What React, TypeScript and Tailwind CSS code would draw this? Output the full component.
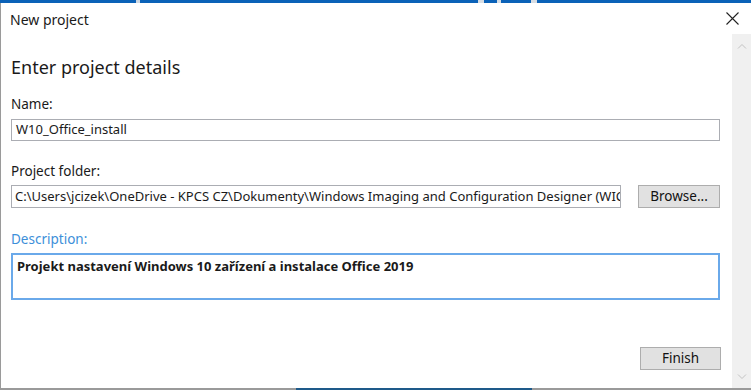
import React from 'react';

const FONT = { fontFamily: '"Segoe UI", "Noto Sans", "Open Sans", sans-serif' };

const TopStrip = () => (
  <div className="flex h-[3px] w-full">
    <div className="w-[136px] bg-[#0b62b8]" />
    <div className="w-[4px] bg-[#cfd8e2]" />
    <div className="w-[338px] bg-[#0b62b8]" />
    <div className="w-[6px] bg-[#d8dde3]" />
    <div className="w-[13px] bg-[#0b62b8]" />
    <div className="w-[4px] bg-[#d8dde3]" />
    <div className="w-[30px] bg-[#0b62b8]" />
    <div className="w-[6px] bg-[#d8dde3]" />
    <div className="flex-1 bg-[#0b62b8]" />
  </div>
);

const Chevron = ({ up }: { up?: boolean }) => (
  <svg width="10" height="6" viewBox="0 0 10 6" className="text-[#c2c2c2]">
    <path d={up ? 'M1 5.5 L5 1.5 L9 5.5' : 'M1 0.5 L5 4.5 L9 0.5'} fill="none" stroke="currentColor" strokeWidth="1" />
  </svg>
);

const Button = ({ label, w }: { label: string; w: string }) => (
  <button className={`${w} h-[23px] shrink-0 border border-[#adadad] bg-[#e1e1e1] text-[13.5px] text-[#111] leading-none`}>
    {label}
  </button>
);

export default function App() {
  return (
    <div className="w-[751px] h-[390px] bg-white overflow-hidden flex flex-col text-[#1a1a1a]" style={FONT}>
      <TopStrip />
      <div className="flex-1 flex flex-col border-l border-[#9a9a9a] min-h-0">
        <div className="h-[31px] shrink-0 flex items-center justify-between pl-[9px] pr-[12px]">
          <span className="text-[14px] pt-[1px]">New project</span>
          <svg width="13" height="13" viewBox="0 0 13 13">
            <path d="M0.5 0.5 L12.5 12.5 M12.5 0.5 L0.5 12.5" stroke="#222" strokeWidth="1.1" />
          </svg>
        </div>
        <div className="flex-1 flex min-h-0">
          <div className="flex-1 min-w-0 flex flex-col pl-[10px] pr-[12px]">
            <div className="text-[18px] leading-[24px] mt-[21px]">Enter project details</div>
            <div className="text-[13.5px] mt-[16px] leading-[18px]">Name:</div>
            <div className="mt-[6px] h-[22px] border border-[#abadb3] flex items-center px-[4px] text-[13px]">
              W10_Office_install
            </div>
            <div className="text-[13.5px] mt-[21px] leading-[18px]">Project folder:</div>
            <div className="mt-[5px] flex items-center gap-[17px]">
              <div className="flex-1 min-w-0 h-[23px] border border-[#abadb3] flex items-center pl-[3px] text-[13px] whitespace-nowrap overflow-hidden">
                C:\Users\jcizek\OneDrive - KPCS CZ\Dokumenty\Windows Imaging and Configuration Designer (WICD)
              </div>
              <Button label="Browse..." w="w-[82px]" />
            </div>
            <div className="text-[13.5px] mt-[22px] leading-[18px] text-[#3d8fd9]">Description:</div>
            <div className="mt-[5px] h-[47px] shrink-0 border-2 border-[#6aa9ea] pl-[4px] pt-[2px] leading-[18px] text-[13px] font-bold">
              Projekt nastavení Windows 10 zařízení a instalace Office 2019
            </div>
            <div className="mt-[47px] flex justify-end pr-0 mr-[-1px]">
              <Button label="Finish" w="w-[81px]" />
            </div>
          </div>
          <div className="w-[19px] shrink-0 bg-[#f0f0f0] flex flex-col items-center justify-between pt-[9px] pb-[8px]">
            <Chevron up />
            <Chevron />
          </div>
        </div>
        <div className="flex h-[2px] shrink-0">
          <div className="w-[295px] bg-[#9a9a9a]" />
          <div className="w-[236px] bg-[#1e5a8a]" />
          <div className="flex-1 bg-[#9a9a9a]" />
        </div>
      </div>
    </div>
  );
}
